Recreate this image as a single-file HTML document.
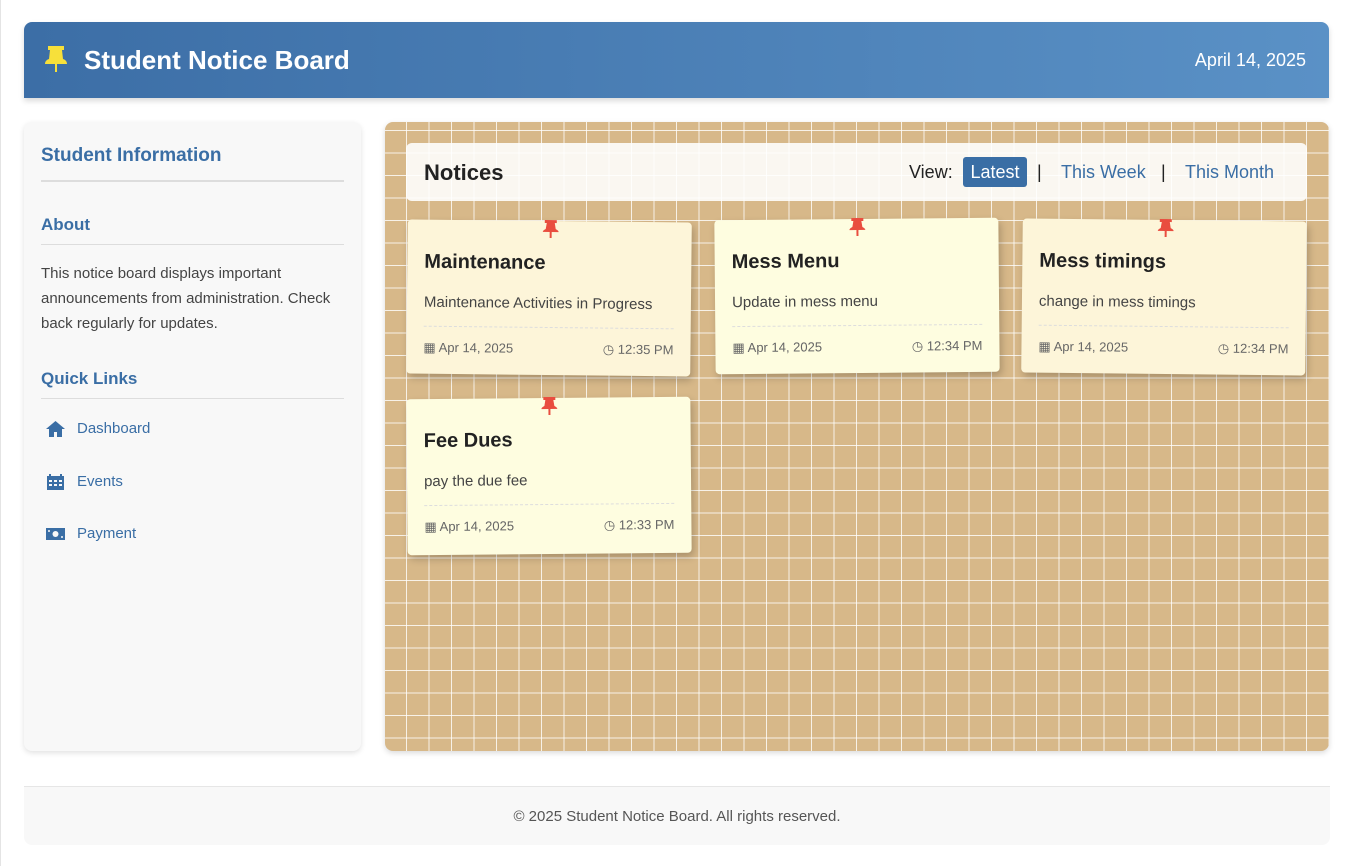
<!DOCTYPE html>
<html><head><meta charset="utf-8"><style>
*{box-sizing:border-box;margin:0;padding:0}
body{width:1347px;height:866px;background:#fff;font-family:"Segoe UI","Liberation Sans",sans-serif;color:#333;position:relative;overflow:hidden;border-left:1px solid #e4e4e4}
.header{position:absolute;left:23px;top:22px;width:1305px;height:76px;border-radius:8px 8px 0 0;background:linear-gradient(90deg,#3c6ea6,#5a91c6);box-shadow:0 3px 6px rgba(0,0,0,.15);color:#fff}
.header h1{position:absolute;left:60px;top:23px;font-size:26px;font-weight:bold}
.header .pin{position:absolute;left:21px;top:24px}
.header .date{position:absolute;right:23px;top:28px;font-size:18px}
.side{position:absolute;left:23px;top:122px;width:337px;height:629px;background:#f8f8f8;border-radius:8px;box-shadow:0 2px 6px rgba(0,0,0,.12);padding:0 17px}
.side h2{font-size:19px;color:#3a6ea5;font-weight:bold;margin-top:23px;padding-bottom:13px;border-bottom:2px solid #ddd}
.side h3{font-size:17px;color:#3a6ea5;font-weight:bold;padding-bottom:9px;border-bottom:1px solid #ddd}
.side p{font-size:15px;line-height:25px;color:#444;margin-top:16px}
.link{position:absolute;left:22px;font-size:15px;color:#3a6ea5;display:flex;align-items:center}
.link svg{margin-right:12px}
.board{position:absolute;left:384px;top:122px;width:944px;height:629px;border-radius:8px;background-color:#d7b889;
background-image:linear-gradient(90deg,rgba(255,255,255,.8) 1px,transparent 1px),linear-gradient(rgba(255,255,255,.8) 1px,transparent 1px);
background-size:22.5px 22.5px;background-position:21px 8px;box-shadow:0 2px 6px rgba(0,0,0,.15)}
.bar{position:absolute;left:405px;top:143px;width:901px;height:58px;background:rgba(255,255,255,.88);border-radius:6px}
.bar h2{position:absolute;left:18px;top:17px;font-size:22px;font-weight:bold;color:#222}
.bar .v{position:absolute;top:19px;font-size:18px}
.card{position:absolute;width:284px;height:154px;border-radius:4px;box-shadow:2px 4px 8px rgba(0,0,0,.22);padding:0 17px}
.card h3{font-size:20px;font-weight:bold;color:#222;margin-top:31px}
.card .d{font-size:15px;color:#444;margin-top:20px;padding-bottom:15px;border-bottom:1px dashed #ddd}
.card .m{display:flex;justify-content:space-between;font-size:13px;color:#666;margin-top:13px}
.card .m span{display:flex;align-items:center;gap:5px}
.card .pin{position:absolute;left:135px;top:-1px}
.footer{position:absolute;left:23px;top:786px;width:1306px;height:59px;background:#f8f8f8;border-top:1px solid #e6e6e6;border-radius:0 0 8px 8px;text-align:center;line-height:60px;font-size:15px;color:#555}
</style></head><body>
<div class="header">
<svg class="pin" width="22" height="30" viewBox="0 0 22 30"><path d="M3 0h16v4h-2l1 9c3 1 4 3 4 5H0c0-2 1-4 4-5l1-9H3z" fill="#f7e03a"/><rect x="10" y="18" width="2" height="8" fill="#f7e03a"/></svg>
<h1>Student Notice Board</h1><div class="date">April 14, 2025</div></div>

<div class="side">
<h2>Student Information</h2>
<h3 style="margin-top:33px">About</h3>
<p>This notice board displays important announcements from administration. Check back regularly for updates.</p>
<h3 style="margin-top:33px">Quick Links</h3>
<div class="link" style="top:298px"><svg width="19" height="16" viewBox="0 0 19 16"><path d="M9.5 0L0 8h3v8h5v-5h3v5h5V8h3z" fill="#3a6ea5"/></svg>Dashboard</div>
<div class="link" style="top:351px"><svg width="19" height="16" viewBox="0 0 19 16"><path d="M3 0h2v2h9V0h2v2h2v14H1V2h2z" fill="#3a6ea5"/><path d="M3 6h3v2H3zm5 0h3v2H8zm5 0h3v2h-3zM3 10h3v2H3zm5 0h3v2H8zm5 0h3v2h-3z" fill="#f8f8f8"/></svg>Events</div>
<div class="link" style="top:403px"><svg width="19" height="16" viewBox="0 0 19 16"><path d="M0 2h19v12H0z" fill="#3a6ea5"/><circle cx="9.5" cy="8" r="3" fill="#f8f8f8"/><circle cx="3" cy="5" r="1" fill="#f8f8f8"/><circle cx="16" cy="11" r="1" fill="#f8f8f8"/></svg>Payment</div>
</div>

<div class="board"></div>
<div class="bar"><h2>Notices</h2>
<span class="v" style="left:503px;color:#222">View:</span>
<span style="position:absolute;left:557px;top:14px;width:64px;height:30px;background:#3a6ea5;border-radius:3px;color:#fff;font-size:18px;text-align:center;line-height:30px">Latest</span>
<span class="v" style="left:631px;color:#222">|</span>
<span class="v" style="left:655px;color:#3a6ea5">This Week</span>
<span class="v" style="left:755px;color:#222">|</span>
<span class="v" style="left:779px;color:#3a6ea5">This Month</span>
</div>

<div class="card" style="left:406px;top:221px;background:#fdf5d9;transform:rotate(0.6deg)">
<svg class="pin" width="16" height="20" viewBox="0 0 16 20"><path d="M2 0h12v3h-2l1 6c2 1 3 2 3 3H0c0-1 1-2 3-3l1-6H2z" fill="#e94d3f"/><rect x="7" y="12" width="2" height="6" fill="#e94d3f"/></svg>
<h3>Maintenance</h3><div class="d">Maintenance Activities in Progress</div>
<div class="m"><span>▦ Apr 14, 2025</span><span>◷ 12:35 PM</span></div></div>

<div class="card" style="left:714px;top:219px;background:#fefde0;transform:rotate(-0.5deg)">
<svg class="pin" width="16" height="20" viewBox="0 0 16 20"><path d="M2 0h12v3h-2l1 6c2 1 3 2 3 3H0c0-1 1-2 3-3l1-6H2z" fill="#e94d3f"/><rect x="7" y="12" width="2" height="6" fill="#e94d3f"/></svg>
<h3>Mess Menu</h3><div class="d">Update in mess menu</div>
<div class="m"><span>▦ Apr 14, 2025</span><span>◷ 12:34 PM</span></div></div>

<div class="card" style="left:1021px;top:220px;background:#fdf5d9;transform:rotate(0.6deg)">
<svg class="pin" width="16" height="20" viewBox="0 0 16 20"><path d="M2 0h12v3h-2l1 6c2 1 3 2 3 3H0c0-1 1-2 3-3l1-6H2z" fill="#e94d3f"/><rect x="7" y="12" width="2" height="6" fill="#e94d3f"/></svg>
<h3>Mess timings</h3><div class="d">change in mess timings</div>
<div class="m"><span>▦ Apr 14, 2025</span><span>◷ 12:34 PM</span></div></div>

<div class="card" style="left:406px;top:398px;height:156px;background:#fefde0;transform:rotate(-0.5deg)">
<svg class="pin" width="16" height="20" viewBox="0 0 16 20"><path d="M2 0h12v3h-2l1 6c2 1 3 2 3 3H0c0-1 1-2 3-3l1-6H2z" fill="#e94d3f"/><rect x="7" y="12" width="2" height="6" fill="#e94d3f"/></svg>
<h3>Fee Dues</h3><div class="d">pay the due fee</div>
<div class="m"><span>▦ Apr 14, 2025</span><span>◷ 12:33 PM</span></div></div>

<div class="footer">© 2025 Student Notice Board. All rights reserved.</div>
</body></html>
